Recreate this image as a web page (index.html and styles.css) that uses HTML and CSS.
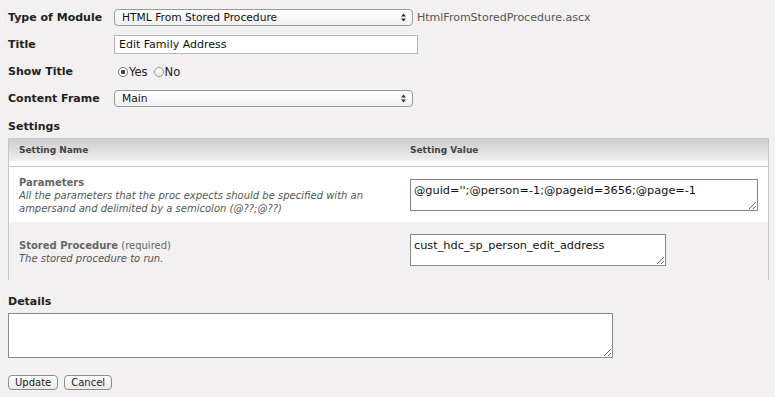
FILE: index.html
```html
<!DOCTYPE html>
<html lang="en">

<head>
    <meta charset="UTF-8">
    <title>Edit Module</title>
    <link rel="stylesheet" href="styles.css">
</head>

<body>
    <div class="field">
        <label>Type of Module</label>
        <span class="select select-wide">
            <select>
                <option>HTML From Stored Procedure</option>
            </select>
            <svg class="arrows" width="5" height="9" viewBox="0 0 5 9"><path d="M2.5 0.5L5 3.5H0z M2.5 8.5L5 5.5H0z" fill="#333"/></svg>
        </span>
        <span class="file-name">HtmlFromStoredProcedure.ascx</span>
    </div>
    <div class="field">
        <label>Title</label>
        <input class="text-input" type="text" value="Edit Family Address">
    </div>
    <div class="field">
        <label>Show Title</label>
        <span class="radios">
            <input type="radio" name="showtitle" checked><span>Yes</span>
            <input type="radio" name="showtitle"><span>No</span>
        </span>
    </div>
    <div class="field">
        <label>Content Frame</label>
        <span class="select">
            <select>
                <option>Main</option>
            </select>
            <svg class="arrows" width="5" height="9" viewBox="0 0 5 9"><path d="M2.5 0.5L5 3.5H0z M2.5 8.5L5 5.5H0z" fill="#333"/></svg>
        </span>
    </div>

    <h4 class="section-title">Settings</h4>
    <div class="settings">
        <div class="settings-head">
            <div class="col-name">Setting Name</div>
            <div class="col-value">Setting Value</div>
        </div>
        <div class="setting-row white">
            <div class="col-name first">
                <b>Parameters</b>
                <i>All the parameters that the proc expects should be specified with an ampersand and delimited by a semicolon (@??;@??)</i>
            </div>
            <div class="col-value">
                <textarea class="param-box">@guid='';@person=-1;@pageid=3656;@page=-1</textarea>
            </div>
        </div>
        <div class="setting-row">
            <div class="col-name second">
                <b>Stored Procedure</b> (required)
                <i>The stored procedure to run.</i>
            </div>
            <div class="col-value">
                <textarea class="proc-box">cust_hdc_sp_person_edit_address</textarea>
            </div>
        </div>
    </div>

    <h4 class="section-title details-title">Details</h4>
    <textarea class="details-box"></textarea>

    <div class="buttons">
        <button>Update</button>
        <button>Cancel</button>
    </div>
</body>

</html>
```
FILE: styles.css
```css
/* Page */
body {
    margin: 0;
    padding: 4px 8px;
    background-color: #f2f0f1;
    font-family: "DejaVu Sans", Verdana, sans-serif;
    font-size: 11px;
    color: #222;
}

/* Form rows */
.field {
    display: flex;
    align-items: center;
    height: 27px;
}

.field label {
    width: 106px;
    font-weight: bold;
    flex-shrink: 0;
}

/* Select boxes */
.select {
    position: relative;
    display: inline-block;
    width: 299px;
    height: 17px;
}

.select select {
    appearance: none;
    -webkit-appearance: none;
    width: 100%;
    height: 17px;
    margin: 0;
    padding: 0 0 0 7px;
    border: 1px solid #9a9a9a;
    border-radius: 4px;
    background: linear-gradient(#ffffff, #f1f1f1);
    font-family: "DejaVu Sans", sans-serif;
    font-size: 10.7px;
    color: #111;
    line-height: 15px;
}

.select .arrows {
    position: absolute;
    right: 7px;
    top: 4px;
}

.file-name {
    margin-left: 4px;
    font-size: 11px;
    color: #555;
}

.text-input {
    width: 304px;
    height: 19px;
    box-sizing: border-box;
    margin: 0;
    padding: 0 4px;
    border: 1px solid #b5b5b5;
    background: #fff;
    font-family: "DejaVu Sans", sans-serif;
    font-size: 11px;
    color: #111;
}

/* Radio buttons */
.radios {
    display: flex;
    align-items: center;
    padding-left: 4px;
    font-size: 11.5px;
}

.radios input {
    appearance: none;
    -webkit-appearance: none;
    width: 10px;
    height: 10px;
    margin: 0 1px 0 0;
    border: 1px solid #999;
    border-radius: 50%;
    background: linear-gradient(#fff, #e8e8e8);
    box-sizing: border-box;
}

.radios input:checked {
    background: radial-gradient(circle, #34495e 0, #34495e 2px, #fff 2.5px);
    border-color: #777;
}

.radios span + input {
    margin-left: 6px;
}

/* Section titles */
.section-title {
    margin: 6px 0 2px;
    font-size: 11px;
    line-height: 18px;
}

.details-title {
    margin: 13px 0 2px;
}

/* Settings table */
.settings {
    width: 759px;
    height: 141px;
    border: 1px solid #c6c6c6;
    border-bottom: none;
}

.settings-head {
    display: flex;
    height: 22px;
    align-items: center;
    font-size: 9px;
    font-weight: bold;
    color: #444;
    background: linear-gradient(#cecdcd, #f0efef);
    border-bottom: 5px solid #fff;
    box-shadow: 0 1px 0 #c6c6c6;
    margin-bottom: 1px;
}

.col-name {
    width: 391px;
    padding-left: 10px;
    flex-shrink: 0;
}

.col-value {
    flex: 1;
}

.setting-row {
    display: flex;
    padding-top: 12px;
    height: 43px;
}

.setting-row.white {
    background: #fff;
}

.setting-row .col-name {
    font-size: 10px;
    color: #666;
    line-height: 13px;
}

.setting-row .col-name.first {
    margin-top: -3px;
}

.setting-row .col-name.second {
    padding-top: 5px;
}

.setting-row .col-name i {
    display: block;
    color: #555;
}

textarea {
    box-sizing: border-box;
    margin: 0;
    padding: 4px 3px;
    border: 1px solid #888;
    background: #fff;
    font-family: "DejaVu Sans", sans-serif;
    font-size: 11.3px;
    color: #111;
    resize: both;
}

.param-box {
    width: 348px;
    height: 32px;
}

.proc-box {
    width: 256px;
    height: 32px;
}

.details-box {
    display: block;
    width: 605px;
    height: 45px;
}

/* Buttons */
.buttons {
    display: flex;
    gap: 6px;
    margin-top: 17px;
}

.buttons button {
    height: 15px;
    margin: 0;
    padding: 0 6px;
    border: 1px solid #8d8d8d;
    border-radius: 4px;
    background: linear-gradient(#ffffff, #e9e9e9);
    font-family: "DejaVu Sans", sans-serif;
    font-size: 10px;
    color: #222;
    line-height: 13px;
}
```
